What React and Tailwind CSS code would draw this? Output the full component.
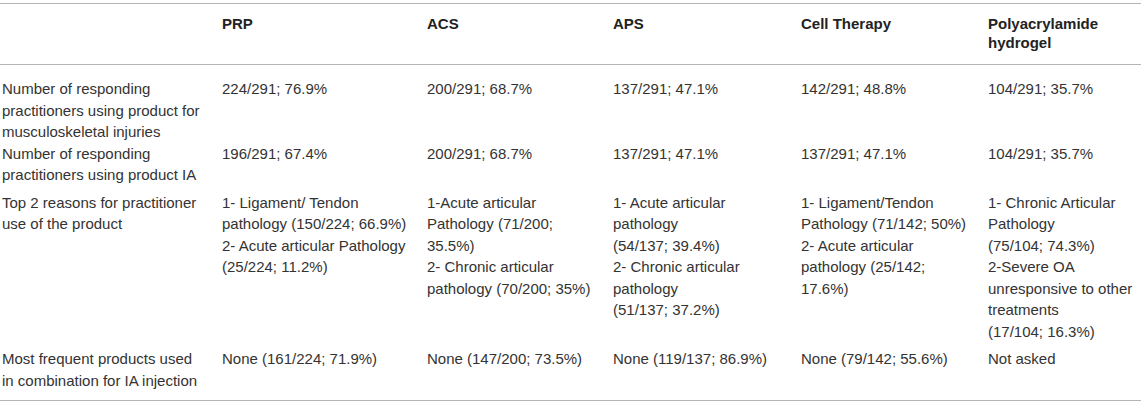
import React from 'react';

const headers = ['', 'PRP', 'ACS', 'APS', 'Cell Therapy', 'Polyacrylamide hydrogel'];

const rows = [
  {
    pad: 'pt-[13px] pb-0',
    cells: [
      ['Number of responding', 'practitioners using product for', 'musculoskeletal injuries'],
      ['224/291; 76.9%'],
      ['200/291; 68.7%'],
      ['137/291; 47.1%'],
      ['142/291; 48.8%'],
      ['104/291; 35.7%'],
    ],
  },
  {
    pad: 'pt-0 pb-0',
    cells: [
      ['Number of responding', 'practitioners using product IA'],
      ['196/291; 67.4%'],
      ['200/291; 68.7%'],
      ['137/291; 47.1%'],
      ['137/291; 47.1%'],
      ['104/291; 35.7%'],
    ],
  },
  {
    pad: 'pt-[6px] pb-0',
    cells: [
      ['Top 2 reasons for practitioner', 'use of the product'],
      ['1- Ligament/ Tendon', 'pathology (150/224; 66.9%)', '2- Acute articular Pathology', '(25/224; 11.2%)'],
      ['1-Acute articular', 'Pathology (71/200;', '35.5%)', '2- Chronic articular', 'pathology (70/200; 35%)'],
      ['1- Acute articular', 'pathology', '(54/137; 39.4%)', '2- Chronic articular', 'pathology', '(51/137; 37.2%)'],
      ['1- Ligament/Tendon', 'Pathology (71/142; 50%)', '2- Acute articular', 'pathology (25/142;', '17.6%)'],
      ['1- Chronic Articular', 'Pathology', '(75/104; 74.3%)', '2-Severe OA', 'unresponsive to other', 'treatments', '(17/104; 16.3%)'],
    ],
  },
  {
    pad: 'pt-[6px] pb-[9px]',
    cells: [
      ['Most frequent products used', 'in combination for IA injection'],
      ['None (161/224; 71.9%)'],
      ['None (147/200; 73.5%)'],
      ['None (119/137; 86.9%)'],
      ['None (79/142; 55.6%)'],
      ['Not asked'],
    ],
  },
];

const cols = 'grid grid-cols-[220px_205px_186px_188px_187px_1fr]';

const Cell = ({ lines }) => (
  <div className="pl-[2px]">
    {lines.map((l, i) => (
      <div key={i} className="whitespace-nowrap">
        {l}
      </div>
    ))}
  </div>
);

export default function App() {
  return (
    <div
      className="w-[1143px] h-[404px] bg-white pt-[3px]"
      style={{ fontFamily: '"Liberation Sans", Arial, sans-serif' }}
    >
      <div className="w-[1141px] border-t border-b border-[#b4b4b4]">
        <div className={`${cols} h-[61px] pt-[10px] border-b border-[#b4b4b4] text-[15px] leading-[19px] font-bold text-[#222]`}>
          {headers.map((h, i) => (
            <div key={i} className={i === 5 ? 'pl-[2px] pr-[20px]' : 'pl-[2px]'}>
              {h}
            </div>
          ))}
        </div>
        {rows.map((r, ri) => (
          <div key={ri} className={`${cols} ${r.pad} text-[15px] leading-[21.5px] text-[#333]`}>
            {r.cells.map((c, ci) => (
              <Cell key={ci} lines={c} />
            ))}
          </div>
        ))}
      </div>
    </div>
  );
}
